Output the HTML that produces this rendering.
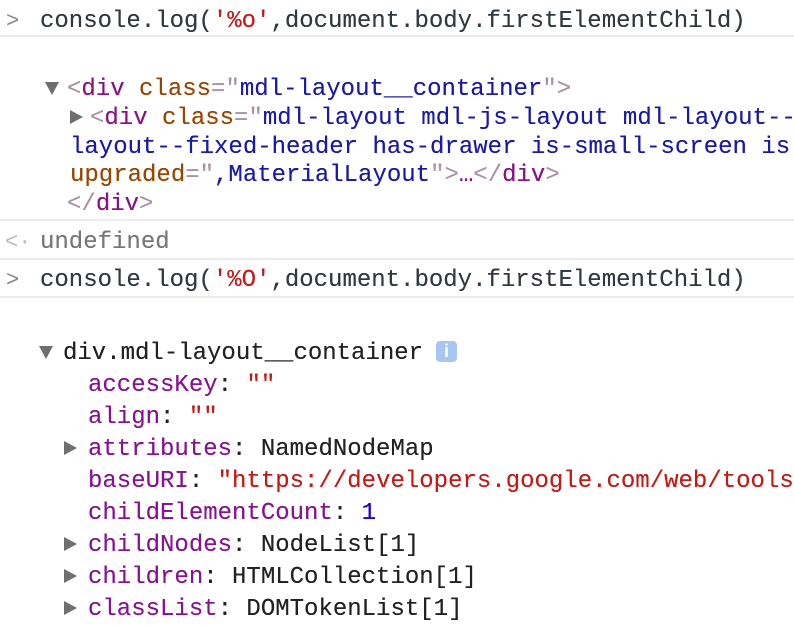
<!DOCTYPE html>
<html><head><meta charset="utf-8"><style>
html,body{margin:0;padding:0;background:#fff;width:794px;height:628px;overflow:hidden}
body{position:relative;font-family:"Liberation Mono",monospace;font-size:24px;color:#222}
.l{position:absolute;white-space:pre;line-height:28px;height:28px;margin-top:2px;text-shadow:0 0 0.3px currentColor}
.sep{position:absolute;left:0;width:794px;height:2px;background:#ececec}
.tag{color:#881280}.br{color:#a894a6}.an{color:#994500}.av{color:#1a1aa6}
.p{color:#881391}.s{color:#c41a16}.n{color:#1c00cf}.g{color:#999}
.cmd{color:#303942}
.tri{position:absolute;width:0;height:0}
.td{border-left:7px solid transparent;border-right:7px solid transparent;border-top:13px solid #6e6e6e}
.tr{border-top:7px solid transparent;border-bottom:7px solid transparent;border-left:13px solid #6e6e6e}
.pr{position:absolute;color:#888;font-size:22px;line-height:28px;margin-top:2px}
</style></head><body>
<div class="pr" style="left:6px;top:6px">&gt;</div>
<div class="l cmd" style="left:40px;top:6px">console.log(<span class="s">'%o'</span>,document.body.firstElementChild)</div>
<div class="sep" style="top:35px"></div>

<div class="tri td" style="left:45px;top:82px"></div>
<div class="l" style="left:67px;top:74px"><span class="br">&lt;</span><span class="tag">div</span> <span class="an">class</span><span class="br">="</span><span class="av">mdl-layout__container</span><span class="br">"&gt;</span></div>
<div class="tri tr" style="left:70px;top:110px"></div>
<div class="l" style="left:90px;top:103px"><span class="br">&lt;</span><span class="tag">div</span> <span class="an">class</span><span class="br">="</span><span class="av">mdl-layout mdl-js-layout mdl-layout--</span></div>
<div class="l av" style="left:70px;top:132px">layout--fixed-header has-drawer is-small-screen is-</div>
<div class="l" style="left:70px;top:160px"><span class="an">upgraded</span><span class="br">="</span><span class="av">,MaterialLayout</span><span class="br">"&gt;</span><span class="tag">…</span><span class="br">&lt;/</span><span class="tag">div</span><span class="br">&gt;</span></div>
<div class="l" style="left:67px;top:189px"><span class="br">&lt;/</span><span class="tag">div</span><span class="br">&gt;</span></div>
<div class="sep" style="top:219px"></div>

<div class="pr" style="left:5px;top:227px;color:#bbb">&lt;·</div>
<div class="l g" style="left:40px;top:227px;color:#777">undefined</div>
<div class="sep" style="top:258px"></div>

<div class="pr" style="left:6px;top:265px">&gt;</div>
<div class="l cmd" style="left:40px;top:265px">console.log(<span class="s">'%O'</span>,document.body.firstElementChild)</div>
<div class="sep" style="top:296px"></div>

<div class="tri td" style="left:39px;top:346px"></div>
<div class="l" style="left:63px;top:338px">div.mdl-layout__container</div>
<div style="position:absolute;left:436px;top:341px;width:21px;height:21px;border-radius:4px;background:#a9c6f2;color:#fff;font:bold 18px 'Liberation Sans',sans-serif;text-align:center;line-height:21px">i</div>
<div class="l" style="left:88px;top:370px"><span class="p">accessKey</span>: <span class="s">""</span></div>
<div class="l" style="left:88px;top:402px"><span class="p">align</span>: <span class="s">""</span></div>
<div class="tri tr" style="left:64px;top:441px"></div>
<div class="l" style="left:88px;top:434px"><span class="p">attributes</span>: NamedNodeMap</div>
<div class="l" style="left:88px;top:466px"><span class="p">baseURI</span>: <span class="s">"https://developers.google.com/web/tools/</span></div>
<div class="l" style="left:88px;top:498px"><span class="p">childElementCount</span>: <span class="n">1</span></div>
<div class="tri tr" style="left:64px;top:537px"></div>
<div class="l" style="left:88px;top:530px"><span class="p">childNodes</span>: NodeList[1]</div>
<div class="tri tr" style="left:64px;top:569px"></div>
<div class="l" style="left:88px;top:562px"><span class="p">children</span>: HTMLCollection[1]</div>
<div class="tri tr" style="left:64px;top:601px"></div>
<div class="l" style="left:88px;top:594px"><span class="p">classList</span>: DOMTokenList[1]</div>
</body></html>
